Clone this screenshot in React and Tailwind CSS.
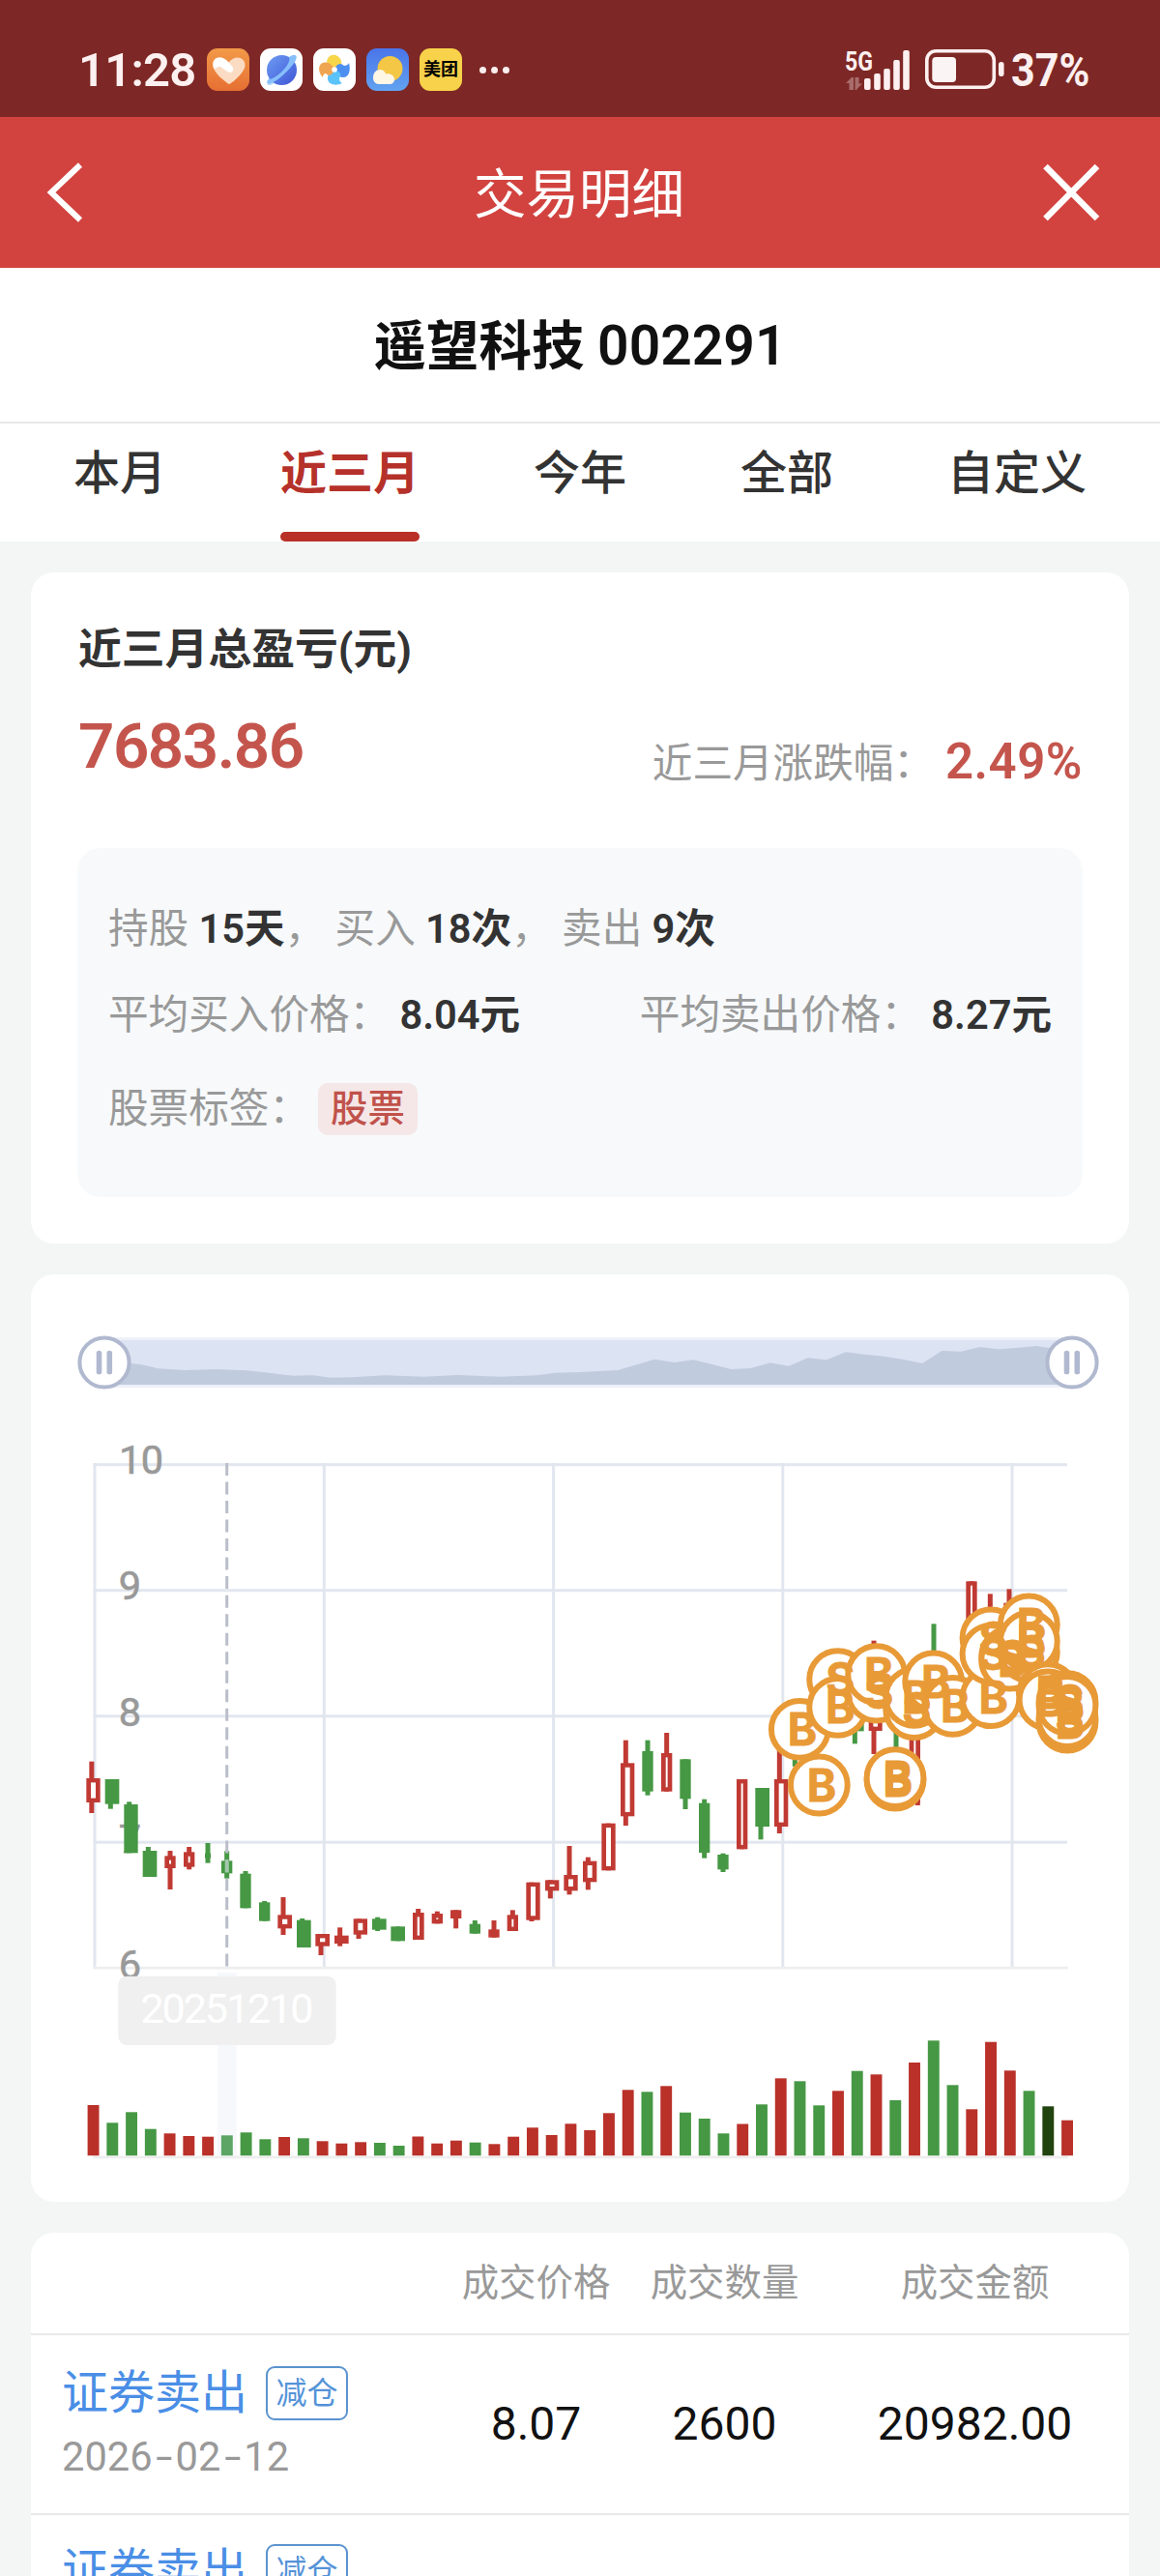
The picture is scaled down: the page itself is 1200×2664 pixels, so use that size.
import React from "react";

const RED = "#c03a33";
const GREEN = "#469844";

const volumeTops = [
  [2177, "r"], [2195.3, "g"], [2184.3, "g"], [2201.7, "g"], [2206.3, "r"], [2209, "r"], [2209.7, "r"], [2208.3, "h"],
  [2205.3, "g"], [2212.3, "g"], [2210, "r"], [2211.3, "g"], [2214.3, "r"], [2216.7, "r"], [2215.3, "r"], [2216, "g"],
  [2219, "g"], [2209.5, "r"], [2216.7, "r"], [2213.7, "r"], [2215.7, "g"], [2217.3, "r"], [2209.7, "r"], [2200.3, "r"],
  [2208, "r"], [2196.3, "r"], [2203, "r"], [2185.3, "r"], [2161.3, "r"], [2163.3, "g"], [2157.3, "r"], [2184.7, "g"],
  [2191, "g"], [2206.3, "g"], [2196.5, "r"], [2176.3, "g"], [2149.3, "r"], [2152.3, "g"], [2177.3, "g"], [2162.3, "r"],
  [2141.7, "g"], [2145.3, "r"], [2172, "g"], [2133, "r"], [2110.3, "g"], [2156.3, "g"], [2181.3, "r"], [2111.7, "r"],
  [2141.3, "r"], [2162.3, "g"], [2178.3, "d"], [2192.7, "r"],
];
const volumeColors = { r: "#b93129", g: "#469844", h: "#5da565", d: "#21430f" };

// Each group: origin x, origin y, then candles in third-pixel units
// [colour, left, right, bodyTop, bodyBottom, wickCentre, high, low]
const candleGroups = [
  {
    ox: 60,
    oy: 1780,
    items: [
      ["r", 88, 131, 177, 252, 104.5, 125, 285],
      ["g", 146, 190, 180, 257, 163, 180, 272],
      ["g", 205, 248, 258, 409, 221, 250, 409],
      ["g", 263, 307, 402, 483, 280, 390, 483],
      ["r", 331, 365, 418, 456, 348, 402, 522],
      ["r", 390, 424, 406, 452, 407, 390, 460],
      ["g", 456, 474, 410, 425, 465, 378, 440],
      ["g", 507, 541, 433, 472, 524, 403, 488],
      ["g", 565, 599, 473, 580, 582, 465, 580],
      ["g", 624, 658, 562, 620, 641, 558, 620],
      ["r", 682, 726, 601, 643, 699, 546, 663],
      ["g", 741, 785, 617, 702, 758, 612, 702],
      ["r", 799, 843, 660, 698, 816, 660, 726],
      ["r", 858, 902, 665, 690, 875, 640, 698],
      ["r", 917, 960, 613, 662, 933, 613, 675],
      ["g", 975, 1019, 613, 647, 992, 608, 651],
      ["g", 1033, 1077, 637, 682, 1055, 637, 682],
      ["r", 1101, 1136, 594, 678, 1118, 582, 678],
    ],
  },
  {
    ox: 420,
    oy: 1740,
    items: [
      ["r", 80, 114, 717, 748, 97, 710, 748],
      ["r", 138, 172, 706, 732, 155, 706, 763],
      ["g", 197, 231, 749, 779, 214, 738, 779],
      ["r", 256, 290, 766, 791, 273, 738, 791],
      ["r", 314, 348, 721, 771, 331, 706, 771],
      ["r", 373, 416, 620, 737, 390, 620, 741],
      ["r", 432, 475, 613, 646, 448, 613, 670],
      ["r", 490, 533, 597, 646, 507, 507, 658],
      ["r", 549, 592, 554, 619, 565, 542, 643],
      ["r", 607, 650, 437, 583, 628, 437, 583],
      ["r", 666, 709, 250, 415, 682, 179, 444],
      ["g", 733, 767, 213, 338, 750, 179, 350],
      ["r", 792, 826, 219, 338, 809, 156, 338],
      ["g", 850, 884, 238, 361, 867, 238, 393],
      ["g", 909, 943, 374, 528, 926, 362, 545],
      ["g", 967, 1001, 534, 580, 984, 530, 588],
      ["r", 1026, 1060, 300, 517, 1043, 300, 517],
      ["g", 1084, 1128, 327, 447, 1101, 327, 487],
    ],
  },
  {
    ox: 770,
    oy: 1600,
    items: [
      ["r", 93, 136, 720, 867, 109, 600, 888],
      ["g", 151, 163, 600, 680, 157, 600, 680],
      ["g", 328, 371, 500, 571, 343, 480, 610],
      ["r", 386, 428, 400, 570, 402, 290, 642],
      ["g", 454, 488, 500, 560, 471, 480, 622],
      ["r", 512, 546, 500, 793, 538, 500, 801],
      ["g", 575, 601, 340, 400, 588, 238, 400],
      ["r", 688, 722, 106, 330, 705, 106, 330],
      ["r", 747, 781, 230, 330, 763, 145, 330],
      ["r", 805, 848, 173, 330, 822, 130, 330],
    ],
  },
];

// Trade markers, in third-pixel units from (770, 1600), in drawing order
const markers = [
  [172, 565, "B"],
  [232, 738, "B"],
  [290, 410, "S"],
  [290, 496, "B"],
  [410, 450, "S"],
  [410, 395, "B"],
  [468, 723, "B"],
  [468, 716, "B"],
  [527, 503, "S"],
  [527, 466, "B"],
  [587, 417, "B"],
  [647, 493, "B"],
  [765, 467, "B"],
  [765, 282, "S"],
  [765, 331, "S"],
  [824, 340, "S"],
  [824, 351, "B"],
  [883, 326, "S"],
  [883, 240, "B"],
  [883, 292, "B"],
  [942, 452, "B"],
  [942, 474, "B"],
  [1002, 479, "S"],
  [1002, 543, "B"],
  [1002, 530, "S"],
  [1002, 490, "B"],
];

const areaPoints =
  "108,1402 135.7,1410 145.7,1411 163.6,1415.3 192,1417 224,1416 256,1417.3 274,1419.3 303,1422.7 324,1422.3 342,1424.7 363.6,1424.3 399,1422.3 438.6,1423.7 474,1422 517,1423.7 556,1422.3 574,1419.7 600,1419 639,1417 677.3,1405.7 697.6,1409 717.5,1406.3 737,1411 756.5,1416 776.4,1415 796.7,1409.3 815.8,1412.7 835.7,1404.3 855,1406.3 875,1398.3 894.7,1400.7 914.6,1402.7 934.9,1406 954,1410 974.3,1397 994,1397.7 1013.7,1393 1033,1395.3 1053,1393.7 1072.6,1392 1085,1394 1109,1398 1109,1432 108,1432";

function Candle({ ox, oy, c }) {
  const [kind, l, r, t, b, w, hi, lo] = c;
  const x = ox + l / 3;
  const y = oy + t / 3;
  const wd = (r - l) / 3;
  const ht = (b - t) / 3;
  const color = kind === "r" ? RED : GREEN;
  const hole = kind === "r" && wd > 9.4 && ht > 9.6;
  return (
    <g fill={color}>
      <rect x={ox + w / 3 - 2.5} y={oy + hi / 3} width="5" height={(lo - hi) / 3} />
      <rect x={x} y={y} width={wd} height={ht} />
      {hole && <rect x={x + 4.7} y={y + 4.4} width={wd - 9.4} height={ht - 8.8} fill="#fff" />}
    </g>
  );
}

function Handle({ cx }) {
  return (
    <g>
      <circle cx={cx} cy="1409" r="25.6" fill="#fff" stroke="#b0b9cf" strokeWidth="4" />
      <rect x={cx - 8.3} y="1396.7" width="5.6" height="24.6" rx="2.6" fill="#b0b9cf" />
      <rect x={cx + 2.5} y="1396.7" width="5.6" height="24.6" rx="2.6" fill="#b0b9cf" />
    </g>
  );
}

function Chart() {
  const gridX = [98, 335.3, 572.6, 809.8, 1047];
  const gridY = [1514.7, 1644.7, 1774.8, 1905.2];
  return (
    <svg viewBox="32 1318 1136 959" className="block h-[959px] w-[1136px] font-['Roboto','Noto_Sans_CJK_SC',sans-serif]">
      <rect x="108" y="1383" width="1001" height="52" fill="#edf1f8" />
      <rect x="108" y="1386" width="1001" height="46" fill="#dce3f3" />
      <polygon points={areaPoints} fill="#c1cbde" />
      <Handle cx={108} />
      <Handle cx={1109} />

      {gridX.map((x) => (
        <rect key={x} x={x - 1.5} y="1513" width="3" height="521" fill="#e2e6ef" />
      ))}
      {gridY.map((y) => (
        <rect key={y} x="96.5" y={y - 1.5} width="1007.5" height="3" fill="#e2e6ef" />
      ))}
      <rect x="96" y="2033.7" width="1009" height="2.8" rx="1" fill="#eeeeee" />

      <g fill="#999" stroke="#999" strokeWidth="0.6" fontSize="41.5">
        <text x="123" y="1524.2" textLength="46">10</text>
        <text x="122.8" y="1653.8">9</text>
        <text x="122.8" y="1784.8">8</text>
        <text x="122.8" y="1915.5">7</text>
        <text x="122.8" y="2045.5">6</text>
      </g>

      {candleGroups.map((g) =>
        g.items.map((c, i) => <Candle key={g.ox + "-" + i} ox={g.ox} oy={g.oy} c={c} />)
      )}
      <line x1="234.7" x2="234.7" y1="1513" y2="2034" stroke="#b9bec9" strokeWidth="3" strokeDasharray="13 6.52" />
      <rect x="232.7" y="1923.5" width="4" height="13" fill="#a3c8ab" />

      <rect x="225" y="2040" width="19.7" height="189" fill="#f6f8fc" />
      <rect x="96" y="2229.5" width="1009" height="2.8" fill="#eeeeee" />
      {volumeTops.map(([top, kind], i) => (
        <rect key={i} x={90.6 + i * 19.755} y={top} width="11.9" height={2229.2 - top} fill={volumeColors[kind]} />
      ))}

      <rect x="122.3" y="2043.7" width="225.4" height="71.3" rx="9" fill="#f0f0f0" />
      <text x="145.5" y="2091.7" fill="#fff" fontSize="43" textLength="179">20251210</text>

      {markers.map(([x, y], i) => (
        <circle key={i} cx={770 + x / 3} cy={1600 + y / 3} r="29.4" fill="#fff" stroke="#e89a37" strokeWidth="6" />
      ))}
      <g fill="#e89a37" stroke="#e89a37" strokeWidth="0.8" fontSize="46" fontWeight="700" fontFamily="Inter, Roboto, sans-serif" textAnchor="middle">
        {markers.map(([x, y, t], i) => (
          <text key={i} x={772.6 + x / 3} y={1616.8 + y / 3}>{t}</text>
        ))}
      </g>
    </svg>
  );
}

function AppIcons() {
  return (
    <div className="flex items-center gap-[11px]">
      <svg viewBox="0 0 44 44" className="size-11">
        <defs>
          <linearGradient id="orangeBg" x1="0" y1="0" x2="0" y2="1">
            <stop offset="0" stopColor="#f29a48" />
            <stop offset="1" stopColor="#e66f33" />
          </linearGradient>
        </defs>
        <rect width="44" height="44" rx="11" fill="url(#orangeBg)" />
        <path d="M23 37c-2-1-17-12-17-20 0-5 3-7.500 7-7.500 4 0 7 2 9.500 5C25 11.500 28 9.500 31.500 9.500c4.500 0 8 3 8 8C39.500 25 25 37 23 37z" fill="#fbdcc3" />
        <path d="M7.500 21C5 14 8 9.500 13 9.500c4 0 7 2 9.500 5 4 4 5.500 6 4.500 8.500-1.500 2.500-4.500 2.500-6.500.5l-7-5z" fill="#fff" />
      </svg>
      <svg viewBox="0 0 44 44" className="size-11">
        <defs>
          <linearGradient id="planet" x1="0" y1="0" x2="1" y2="1">
            <stop offset="0" stopColor="#6d9cf3" />
            <stop offset="1" stopColor="#3f56d6" />
          </linearGradient>
        </defs>
        <rect width="44" height="44" rx="11" fill="#fff" />
        <ellipse cx="22.500" cy="22.500" rx="21" ry="5.500" transform="rotate(-46 22.500 22.500)" fill="#b5dafb" />
        <circle cx="22.500" cy="22.500" r="15.500" fill="url(#planet)" />
        <path d="M30 9c4-3 7-2.500 7.500-.5 1 4-6 12-13 18.500-6 5.500-12 9.500-15.500 9.500-2 0-2-2-1-4 6-1 11-5 15.500-9.500S31.500 13 30 9z" fill="#86bffb" />
      </svg>
      <svg viewBox="0 0 44 44" className="size-11">
        <rect width="44" height="44" rx="11" fill="#fff" />
        <path d="M22 22C16 20 13 16 14.500 11.500 16 7 22 5 26 8.500c4 3.500 4.500 9 1 13.500z" fill="#f8d64a" />
        <path d="M22 22c2-6 6-8 10-4 4 0 5-3 5-3 2 8 0 15-6 15-5 0-8-3-9-8z" fill="#4d8ff0" />
        <path d="M22 22c6 2 8 5 5 9 0 4 3 5 3 5-6 3-14 2-15-4-.5-5 3-8 7-10z" fill="#5cc2fa" />
        <path d="M22 22c-2 5-5 8-9 4-3 0-3 4-3 4C4 24 5 15 12 14.500c5-.5 8 3 10 7.500z" fill="#f0a552" />
        <circle cx="22" cy="22" r="2.800" fill="#fff" />
      </svg>
      <svg viewBox="0 0 44 44" className="size-11">
        <defs>
          <linearGradient id="blueBg" x1="0" y1="0" x2="0" y2="1">
            <stop offset="0" stopColor="#4a74e9" />
            <stop offset="1" stopColor="#62a3f0" />
          </linearGradient>
        </defs>
        <rect width="44" height="44" rx="11" fill="url(#blueBg)" />
        <circle cx="24.500" cy="21" r="13" fill="#f5c746" />
        <path d="M13 37c-4 0-6-3-6-6.500 0-5 3-8.500 7-8.500 3 0 5.500 2 6 4.500 5-1 9 2 9 5.500 0 3-2 5-5 5z" fill="#fff7e6" />
      </svg>
      <div className="flex size-11 items-center justify-center rounded-[11px] bg-[#f8d24a] text-[18px] font-bold leading-none text-black">美团</div>
      <div className="ml-[7px] flex items-center gap-[5px]">
        <i className="size-[7px] rounded-full bg-[#fbeeee]" />
        <i className="size-[7px] rounded-full bg-[#fbeeee]" />
        <i className="size-[7px] rounded-full bg-[#fbeeee]" />
      </div>
    </div>
  );
}

function StatusBar() {
  return (
    <div className="flex h-[121px] items-start justify-between bg-[#7d2826] pl-[81px] pr-[72px] pt-[50px] text-[#fdf0f0]">
      <div className="flex h-11 items-center">
        <span className="w-[133px] text-[49px] font-semibold leading-none tracking-[-0.8px]">11:28</span>
        <AppIcons />
      </div>
      <div className="flex h-11 items-center">
        <svg viewBox="873 50 168 44" className="h-11 w-[168px]">
          <text x="874" y="73" fontSize="28" fontWeight="700" textLength="29" lengthAdjust="spacingAndGlyphs" fill="#fdf0f0">5G</text>
          <path d="M875 86l6-6v13h-2.500v-7zM892 86.500l-6 6V80h2.500v6.500zM881 80h2v13h-2zM884.500 80h2v13h-2z" fill="#a96c6b" />
          <rect x="894" y="81" width="6.600" height="12" rx="2" fill="#fdf0f0" />
          <rect x="904.200" y="76" width="6.600" height="17" rx="2" fill="#fdf0f0" />
          <rect x="914.200" y="71" width="6.600" height="22" rx="2" fill="#fdf0f0" />
          <rect x="924.200" y="62" width="6.600" height="31" rx="2" fill="#fdf0f0" />
          <rect x="934.200" y="52" width="6.600" height="41" rx="2" fill="#fdf0f0" />
          <rect x="958.800" y="52.800" width="69.500" height="37.500" rx="9.500" fill="none" stroke="#fdf0f0" strokeWidth="3.600" />
          <rect x="964.300" y="59" width="24.700" height="26" rx="4" fill="#faf4f4" />
          <rect x="1033" y="64" width="5.600" height="15" rx="2.800" fill="#fdf0f0" />
        </svg>
        <span className="w-[87px] pl-[5px] text-[49px] font-bold leading-none">
          <span className="inline-block origin-left scale-x-[0.88]">37%</span>
        </span>
      </div>
    </div>
  );
}

function Header() {
  return (
    <div className="flex h-[156px] items-center justify-between bg-[#d2433f] pl-[48px] pr-[60px] text-white">
      <svg viewBox="0 0 40 64" className="h-16 w-10" fill="none" stroke="#fff" strokeWidth="6">
        <path d="M35 3.500L5 32L35 60.500" />
      </svg>
      <span className="ml-[32px] pt-[4px] text-[54.5px] leading-[60px]">交易明细</span>
      <svg viewBox="0 0 62 62" className="h-[62px] w-[62px]" fill="none" stroke="#fff" strokeWidth="6.500">
        <path d="M3.500 4L57 58M57 4L3.500 58" />
      </svg>
    </div>
  );
}

function Tabs() {
  const tabs = ["本月", "近三月", "今年", "全部", "自定义"];
  return (
    <div className="flex h-[122px] items-start justify-between bg-white px-[76px] text-[48px] leading-[60px] text-[#333]">
      {tabs.map((t, i) =>
        i === 1 ? (
          <div key={t} className="flex h-full flex-col justify-between font-bold text-[#b5312a]">
            <span className="pt-[22px]">{t}</span>
            <i className="h-[10px] rounded-[5px] bg-[#b93029]" />
          </div>
        ) : (
          <span key={t} className="pt-[22px] font-medium">{t}</span>
        )
      )}
    </div>
  );
}

function Summary() {
  const strong = "font-semibold text-[#333]";
  return (
    <section className="h-[694px] rounded-3xl bg-white px-12 pt-[50px]">
      <h2 className="h-[60px] pl-[1px] text-[44.800px] font-bold leading-[60px] text-[#333]">近三月总盈亏(元)</h2>
      <div className="mt-10 flex h-[68px] justify-between">
        <span className="h-[60px] pl-[1px] text-[65.500px] font-semibold leading-[60px] tracking-[-1.5px] text-[#c4554d]">7683.86</span>
        <div className="flex h-[40px] items-center self-end text-[41.600px] leading-[40px] text-[#999]">
          <span>近三月涨跌幅：</span>
          <span className="ml-[12px] pb-[5px] text-[51px] font-semibold tracking-[0.5px] text-[#c4554d]">2.49%</span>
        </div>
      </div>
      <div className="mt-[67px] h-[361px] rounded-3xl bg-[#f7f9fb] px-8 pt-[54px] text-[41.600px] text-[#999]">
        <p className="h-[60px] whitespace-pre leading-[60px]">
          持股 <b className={strong}>15天</b>， 买入 <b className={strong}>18次</b>， 卖出 <b className={strong}>9次</b>
        </p>
        <div className="mt-[29px] flex h-[60px] justify-between leading-[60px]">
          <span>平均买入价格： <b className={strong}>8.04元</b></span>
          <span>平均卖出价格： <b className={strong}>8.27元</b></span>
        </div>
        <div className="mt-[40px] flex h-[54px] items-center leading-[54px]">
          <span>股票标签：</span>
          <span className="ml-[9px] h-[54px] w-[103px] rounded-[10px] bg-[#f5e7e7] text-center text-[38.400px] font-medium text-[#c0524b]">股票</span>
        </div>
      </div>
    </section>
  );
}

function TradeName({ children }) {
  return (
    <div className="flex h-[56px] items-center">
      <span className="text-[48px] leading-[56px] text-[#4a8ee6]">{children}</span>
      <span className="ml-[19px] h-[56px] w-[85px] rounded-[9px] border-2 border-[#5b93cf] text-center text-[32px] leading-[52px] text-[#5493d8]">减仓</span>
    </div>
  );
}

function TradeDate({ parts }) {
  return (
    <div className="mt-[12px] flex text-[41.600px] leading-[52px] text-[#999]">
      {parts.map((p, i) => (
        <React.Fragment key={i}>
          {i > 0 && (
            <span className="w-[24px] text-center">
              <span className="inline-block scale-x-150">-</span>
            </span>
          )}
          <span>{p}</span>
        </React.Fragment>
      ))}
    </div>
  );
}

function Trades() {
  return (
    <section className="h-[355px] overflow-hidden rounded-t-3xl bg-white">
      <div className="grid h-[106px] grid-cols-[425px_195px_195px_321px] border-b-2 border-[#e8e8e8] text-center text-[38.400px] leading-[103px] text-[#999]">
        <span />
        <span>成交价格</span>
        <span>成交数量</span>
        <span className="pl-[2px]">成交金额</span>
      </div>
      <div className="grid h-[186px] grid-cols-[425px_195px_195px_321px] border-b-2 border-[#e8e8e8] text-center text-[48px] leading-[184px] text-[#111]">
        <div className="pl-8 pt-[32px] text-left">
          <TradeName>证券卖出</TradeName>
          <TradeDate parts={["2026", "02", "12"]} />
        </div>
        <span>8.07</span>
        <span>2600</span>
        <span className="pl-[2px]">20982.00</span>
      </div>
      <div className="pl-8 pt-[30px]">
        <TradeName>证券卖出</TradeName>
      </div>
    </section>
  );
}

export default function App() {
  return (
    <div className="h-[2664px] w-[1200px] overflow-hidden bg-[#f4f6f6] font-['Roboto','Noto_Sans_CJK_SC',sans-serif]">
      <StatusBar />
      <Header />
      <h1 className="h-[161px] border-b-2 border-[#e8e8e8] bg-white text-center text-[54.500px] font-bold leading-[161px] text-[#111]">
        遥望科技 <span className="text-[57px] font-semibold">002291</span>
      </h1>
      <Tabs />
      <main className="flex flex-col gap-8 px-8 pt-8">
        <Summary />
        <section className="h-[959px] overflow-hidden rounded-3xl bg-white">
          <Chart />
        </section>
        <Trades />
      </main>
    </div>
  );
}
